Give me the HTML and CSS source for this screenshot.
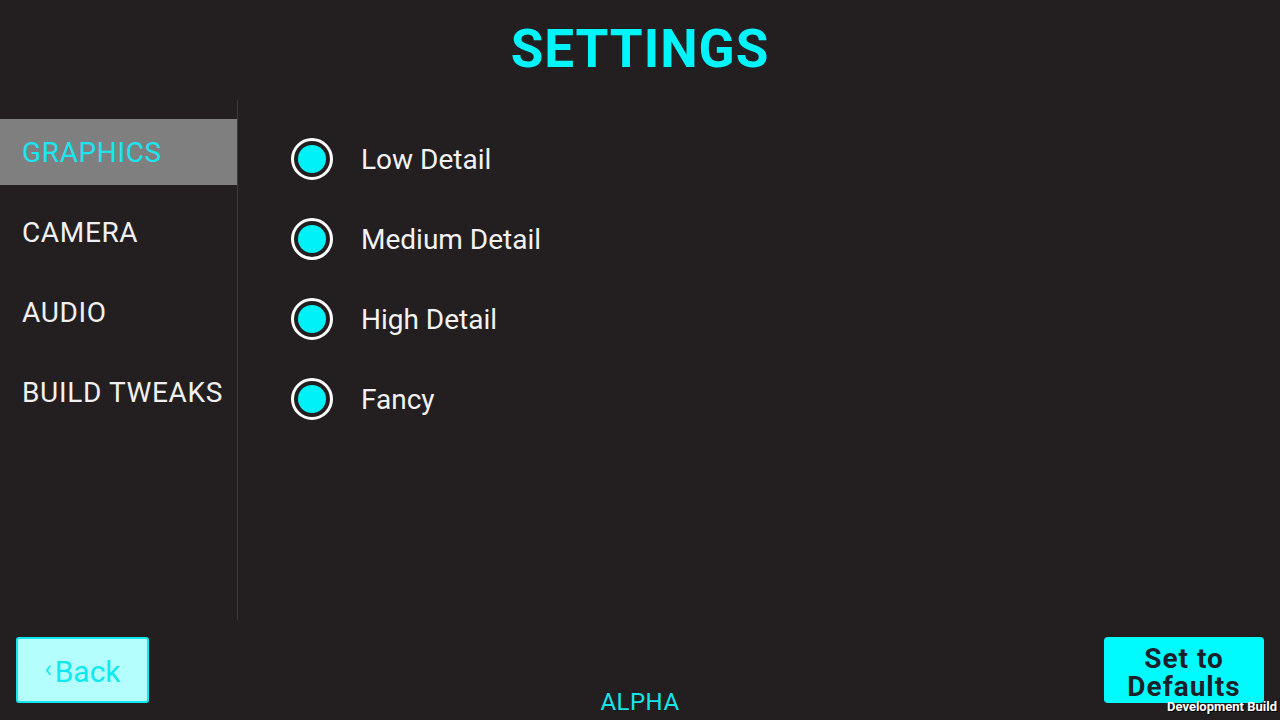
FILE: index.html
```html
<!DOCTYPE html>
<html>
<head>
<meta charset="utf-8">
<link rel="stylesheet" href="styles.css">
</head>
<body>
<div class="screen">
  <header class="title">SETTINGS</header>
  <div class="main">
    <nav class="sidebar">
      <div class="tab active">GRAPHICS</div>
      <div class="tab">CAMERA</div>
      <div class="tab">AUDIO</div>
      <div class="tab">BUILD TWEAKS</div>
    </nav>
    <section class="content">
      <div class="option"><span class="radio"><span class="dot"></span></span><span class="label">Low Detail</span></div>
      <div class="option"><span class="radio"><span class="dot"></span></span><span class="label">Medium Detail</span></div>
      <div class="option"><span class="radio"><span class="dot"></span></span><span class="label">High Detail</span></div>
      <div class="option"><span class="radio"><span class="dot"></span></span><span class="label">Fancy</span></div>
    </section>
  </div>
  <footer class="footer">
    <div class="left"><button class="back"><span class="chev">‹</span>Back</button></div>
    <div class="center"><span class="alpha">ALPHA</span></div>
    <div class="right"><button class="defaults">Set to<br>Defaults</button></div>
  </footer>
  <div class="devbuild">Development Build</div>
</div>
</body>
</html>
```
FILE: styles.css
```css
html, body {
  margin: 0;
  padding: 0;
  background: #231f20;
}
.screen {
  position: relative;
  width: 1280px;
  height: 720px;
  overflow: hidden;
  font-family: Roboto, "Liberation Sans", sans-serif;
  color: #f2f2f2;
}
.title {
  height: 100px;
  display: flex;
  justify-content: center;
  align-items: center;
  color: #00f4fb;
  font-weight: 700;
  font-size: 53px;
  letter-spacing: 1px;
  padding-bottom: 2px;
  box-sizing: border-box;
}
.main {
  display: flex;
  height: 520px;
}
.sidebar {
  width: 237px;
  border-right: 1px solid #3c393a;
  padding-top: 19px;
  display: flex;
  flex-direction: column;
  gap: 14px;
}
.tab {
  height: 66px;
  display: flex;
  align-items: center;
  padding-left: 22px;
  font-size: 28px;
  letter-spacing: 0.65px;
  color: #f0f0f0;
}
.tab.active {
  background: #7f7f7f;
  color: #19e6ef;
}
.content {
  padding-left: 53px;
  padding-top: 38px;
  display: flex;
  flex-direction: column;
  gap: 38px;
}
.option {
  display: flex;
  align-items: center;
  height: 42px;
}
.radio {
  width: 42px;
  height: 42px;
  box-sizing: border-box;
  border-radius: 50%;
  border: 3px solid #ffffff;
  display: flex;
  align-items: center;
  justify-content: center;
}
.dot {
  width: 28px;
  height: 28px;
  border-radius: 50%;
  background: #00f2f8;
}
.label {
  margin-left: 28px;
  font-size: 28px;
  color: #f2f2f2;
}
.footer {
  height: 100px;
  display: grid;
  grid-template-columns: 1fr auto 1fr;
}
.left {
  padding: 17px 0 0 16px;
}
.back {
  width: 133px;
  height: 66px;
  box-sizing: border-box;
  background: #b4fffe;
  border: 2px solid #10e8ef;
  border-radius: 3px;
  color: #10e8ef;
  font-family: Roboto, "Liberation Sans", sans-serif;
  font-size: 30px;
  padding: 2px 0 0 0;
  display: flex;
  align-items: center;
  justify-content: center;
}
.chev {
  font-size: 24px;
  margin-right: 3px;
  margin-top: -4px;
}
.center {
  display: flex;
  align-items: flex-end;
  padding-bottom: 4px;
}
.alpha {
  color: #17e4ea;
  font-size: 24px;
  letter-spacing: 0.5px;
}
.right {
  display: flex;
  justify-content: flex-end;
  padding: 17px 16px 0 0;
}
.defaults {
  width: 160px;
  height: 66px;
  box-sizing: border-box;
  background: #00fbff;
  border: none;
  border-radius: 4px;
  color: #1b1f2a;
  font-family: Roboto, "Liberation Sans", sans-serif;
  font-weight: 700;
  font-size: 28px;
  letter-spacing: 1px;
  line-height: 28px;
  padding: 6px 0 0 0;
}
.devbuild {
  position: absolute;
  right: 3px;
  bottom: 7px;
  color: #ffffff;
  font-family: Roboto, "Liberation Sans", sans-serif;
  font-weight: 700;
  font-size: 13px;
  line-height: 13px;
  text-shadow: 1px 1px 0 #000;
}
```
